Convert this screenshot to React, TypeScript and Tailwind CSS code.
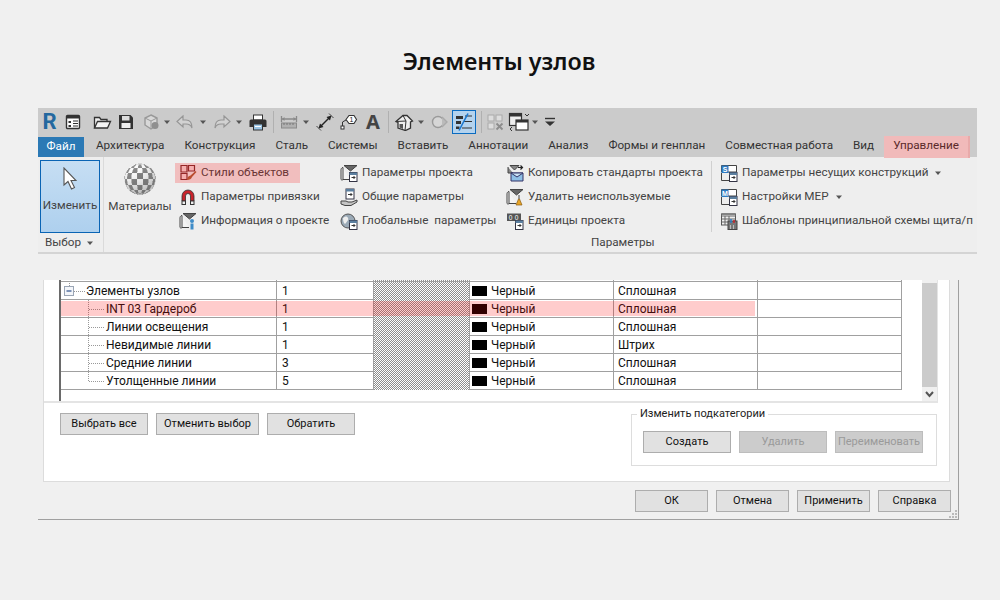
import type { ReactNode } from "react";

function Caret() {
    return (
        <svg width="8" height="8" viewBox="0 0 8 8" className="shrink-0">
            <path d="M1 2.5h6L4 6z" fill="#555" />
        </svg>
    );
}

function Ic({ children, w = 18, h = 18 }: { children: ReactNode; w?: number; h?: number }) {
    return (
        <svg width={w} height={h} viewBox={`0 0 ${w} ${h}`} fill="none" className="shrink-0">
            {children}
        </svg>
    );
}

// toolbar icons
const ListIcon = () => (
    <Ic>
        <rect x="2.5" y="2.5" width="13" height="13" rx="1" fill="#fff" stroke="#333" strokeWidth="1.4" />
        <path d="M3 3h12v2.5H3z" fill="#333" />
        <path d="M4.5 8h2.5v2H4.5zM4.5 12h2.5v2H4.5z" fill="#333" />
        <path d="M9 8h5M9 10.5h5M9 13h5" stroke="#333" />
    </Ic>
);
const OpenIcon = () => (
    <Ic w={20}>
        <path d="M2.5 15V4.5h5l1.5 2h6v2" stroke="#333" strokeWidth="1.3" fill="#eee" />
        <path d="M2.5 15l3-6.5h13l-3 6.5z" stroke="#333" strokeWidth="1.3" fill="#f4f4f4" />
    </Ic>
);
const SaveIcon = () => (
    <Ic>
        <path d="M2 2h11.5L16 4.5V16H2z" fill="#333" />
        <rect x="5" y="3" width="7.5" height="4.5" fill="#ddd" />
        <rect x="4.5" y="10" width="9" height="5" fill="#eee" />
    </Ic>
);
const CubeIcon = () => (
    <Ic>
        <path d="M9 2l6 3v7l-6 4-6-4V5z" stroke="#999" strokeWidth="1.4" fill="#d8d8d8" />
        <path d="M3 5l6 3 6-3M9 8v8" stroke="#999" />
        <circle cx="13" cy="12.5" r="3.5" fill="#8f8f8f" />
    </Ic>
);
const UndoIcon = ({ flip }: { flip?: boolean }) => (
    <Ic w={20}>
        <path
            d={flip ? "M12 3l6 5.5-6 5.5v-3H9c-3 0-5 1-6 4 0-5 2-8 6-8h3z" : "M8 3L2 8.5 8 14v-3h3c3 0 5 1 6 4 0-5-2-8-6-8H8z"}
            stroke="#969696"
            strokeWidth="1.2"
            fill="#d2d2d2"
        />
    </Ic>
);
const PrintIcon = () => (
    <Ic w={20}>
        <rect x="5.5" y="2" width="9" height="5" fill="#fff" stroke="#333" />
        <path d="M3 6.5h14a1.5 1.5 0 011.5 1.5v6h-17V8A1.5 1.5 0 013 6.5z" fill="#333" />
        <rect x="5.5" y="11" width="9" height="6" fill="#9cc6e6" stroke="#333" />
        <path d="M7 13.5h6" stroke="#fff" />
    </Ic>
);
const MeasureIcon = () => (
    <Ic>
        <path d="M1.5 3v6M16.5 3v6M2 6h14" stroke="#8a8a8a" strokeWidth="1.3" />
        <path d="M2 6l2.5-2v4zM16 6l-2.5-2v4z" fill="#8a8a8a" />
        <rect x="1.5" y="10" width="15" height="5" fill="#b0b0b0" stroke="#8a8a8a" />
        <path d="M4 10v2M7 10v2M10 10v2M13 10v2" stroke="#777" />
    </Ic>
);
const DimIcon = () => (
    <Ic>
        <path d="M4.5 13.5l9-9" stroke="#222" strokeWidth="1.5" />
        <path d="M2.5 15.5l1.5-5 3.5 3.5zM15.5 2.5l-5 1.5 3.5 3.5z" fill="#222" />
        <path d="M0.5 13l4.5 4.5M13 0.5l4.5 4.5" stroke="#444" />
    </Ic>
);
const TagIcon = () => (
    <Ic>
        <rect x="1" y="13" width="3" height="3" fill="#fff" stroke="#333" />
        <path d="M2.5 13V9L6 7" stroke="#333" />
        <path d="M6 6.5L9 2.5h5l2.5 4L14 10.5H9z" fill="#fff" stroke="#333" strokeWidth="1.1" />
        <text x="11.5" y="9" fontSize="7" textAnchor="middle" fill="#222" fontFamily="Liberation Sans">1</text>
    </Ic>
);
const HouseIcon = () => (
    <Ic w={20}>
        <path d="M2 8.5L9 2.5h4l5.5 5.5-2 1V15l-5 2.5L4 15V9.5z" fill="#eee" stroke="#333" strokeWidth="1.3" />
        <path d="M9 2.5l3 5.5-1 9.5M2 8.5l10-.5" stroke="#333" />
        <path d="M5.5 11h3.5v5l-3.5-1.5z" fill="#555" />
    </Ic>
);
const MarkIcon = () => (
    <Ic>
        <circle cx="8" cy="9" r="5.5" fill="#d6d6d6" stroke="#9a9a9a" strokeWidth="1.4" />
        <path d="M12 4l5 5-5 5" stroke="#aaa" strokeWidth="1.4" fill="#bbb" />
    </Ic>
);
const ThinIcon = () => (
    <Ic w={22} h={20}>
        <path d="M3 4h7v3H3zM3 9h5v3H3zM3 14.5h3.5v2.5H3z" fill="#333" />
        <path d="M12 4h7M11 9.5h8M9 16h10" stroke="#333" />
        <path d="M6 18.5L15 1.5" stroke="#1a78d0" strokeWidth="1.6" />
    </Ic>
);
const GridIcon = () => (
    <Ic>
        <rect x="2" y="2" width="6" height="6" fill="#ddd" stroke="#aaa" />
        <rect x="10" y="2" width="6" height="6" fill="#ddd" stroke="#aaa" />
        <rect x="2" y="10" width="6" height="6" fill="#ddd" stroke="#aaa" />
        <path d="M10.5 10.5l6 6M16.5 10.5l-6 6" stroke="#8c8c8c" strokeWidth="1.8" />
    </Ic>
);
const SwitchIcon = () => (
    <Ic w={22} h={20}>
        <rect x="1.5" y="1.5" width="12" height="12" fill="#eee" stroke="#333" strokeWidth="1.2" />
        <path d="M1.5 2h12v2.5h-12z" fill="#333" />
        <rect x="8" y="8" width="12" height="10" fill="#fff" stroke="#333" strokeWidth="1.2" />
        <path d="M8 8h12v2.5H8z" fill="#333" />
        <path d="M17 2l2 2 2-2M4 15l-2 2 2 2" stroke="#333" />
    </Ic>
);
const MenuIcon = () => (
    <svg width="12" height="12" viewBox="0 0 12 12" className="shrink-0">
        <path d="M1 2.5h10" stroke="#333" strokeWidth="1.4" />
        <path d="M1 5.5h10L6 10z" fill="#333" />
    </svg>
);

// small ribbon icons
const StyleIcon = () => (
    <Ic>
        <path d="M2 1.5h6v6.5H2zM9.5 1.5h6V7h-6zM2 9.5h6v6H2z" fill="#f3d9d9" stroke="#7a3030" strokeWidth="1.2" />
        <path d="M8 16c0-3 2-4 3.5-4.5L16.5 7l1 1-4.5 5c-.5 2-2.5 3-5 3z" fill="#a8603a" />
    </Ic>
);
const MagnetIcon = () => (
    <Ic>
        <path d="M3 13V8a6 6 0 0112 0v5h-3.5V8a2.5 2.5 0 00-5 0v5z" fill="#c8242c" stroke="#333" strokeWidth=".8" />
        <rect x="3" y="13" width="3.5" height="3.5" fill="#eee" stroke="#333" />
        <rect x="11.5" y="13" width="3.5" height="3.5" fill="#eee" stroke="#333" />
    </Ic>
);
const Funnel = () => (
    <>
        <path d="M4 1.5h13L10.5 7z" fill="#666" stroke="#444" />
        <path d="M3 3.5v12h7M3 3.5C1.5 3.5 1 5 1 6v9c0 1 1 1.5 2 .5" stroke="#444" fill="#f4f4f4" />
    </>
);
const DocBadge = () => (
    <>
        <rect x="9.5" y="8.5" width="7.5" height="9" fill="#fff" stroke="#334" />
        <path d="M9.5 8.5H17v2.5H9.5z" fill="#5b7f9f" />
        <path d="M11.5 13.5h3.5M13.5 12l1.5 1.5-1.5 1.5" stroke="#333" />
    </>
);
const InfoIcon = () => (
    <Ic>
        <Funnel />
        <circle cx="13" cy="9" r="2" fill="#3f8cc8" />
        <rect x="11.5" y="11.5" width="3" height="6" fill="#3f8cc8" />
    </Ic>
);
const ProjectIcon = () => (
    <Ic>
        <Funnel />
        <DocBadge />
    </Ic>
);
const SharedIcon = () => (
    <Ic>
        <rect x="6" y="1" width="8" height="10" fill="#fff" stroke="#334" />
        <path d="M6 1h8v2.5H6z" fill="#5b7f9f" />
        <path d="M8 6.5h4M10.5 5l1.5 1.5L10.5 8" stroke="#333" />
        <path d="M1 13h5l2 1h4l5-2v2l-6 3.5H5L1 16z" fill="#c4c4c4" stroke="#444" />
    </Ic>
);
const GlobalIcon = () => (
    <Ic>
        <circle cx="8" cy="9" r="7" fill="#9aa9b6" stroke="#555" />
        <path d="M3 6c2-2 4-2 5 0s-1 3-2 5-3 0-3-5z" fill="#eee" />
        <DocBadge />
    </Ic>
);
const CopyIcon = () => (
    <Ic>
        <path d="M4 1.5h9L8.5 6zM2 3v6h5" stroke="#444" fill="#888" />
        <path d="M12 3.5h4M14.5 1.5l2 2-2 2" stroke="#222" strokeWidth="1.2" />
        <path d="M5 9h12v8H5z" fill="#8fbfe6" stroke="#336" />
        <path d="M5 9h12l-6 4z" fill="#c9e0f3" stroke="#336" />
    </Ic>
);
const PurgeIcon = () => (
    <Ic>
        <Funnel />
        <path d="M12.5 7h1v4h-1z" fill="#444" />
        <path d="M10 17l2.5-6h1l2.5 6z" fill="#e8a526" stroke="#8a5a10" strokeWidth=".7" />
    </Ic>
);
const UnitsIcon = () => (
    <Ic>
        <rect x="1" y="1.5" width="14" height="7.5" fill="#555" />
        <text x="4.5" y="7.5" fontSize="6.5" fill="#fff" textAnchor="middle" fontFamily="Liberation Sans">0</text>
        <text x="10.5" y="7.5" fontSize="6.5" fill="#fff" textAnchor="middle" fontFamily="Liberation Sans">0</text>
        <DocBadge />
    </Ic>
);
const LetterDoc = ({ letter }: { letter: string }) => (
    <Ic>
        <path d="M1.5 1.5h15v6.5h-15z" fill="#fff" stroke="#444" />
        <rect x="1.5" y="1.5" width="7" height="7.5" fill="#2f7cc4" />
        <text x="5" y="7.5" fontSize="7" fill="#fff" textAnchor="middle" fontFamily="Liberation Sans" fontWeight="700">{letter}</text>
        <path d="M1.5 9v7.5H9" stroke="#444" />
        <DocBadge />
    </Ic>
);
const TemplateIcon = () => (
    <Ic>
        <rect x="1.5" y="2" width="14" height="11" fill="#eee" stroke="#555" />
        <path d="M1.5 2h14v2H1.5zM1.5 7h14M1.5 10h14M5 4v9M9 4v9" stroke="#666" />
        <rect x="8" y="9" width="9" height="8.5" fill="#777" stroke="#444" />
        <path d="M10 14h1M13 14h1M10 16h1M13 16h1" stroke="#fff" />
        <path d="M11 11V7" stroke="#2f7cc4" strokeWidth="1.5" />
        <path d="M14 11V8" stroke="#c8242c" strokeWidth="1.5" />
    </Ic>
);

// checkered sphere of the materials button, sampled per pixel
function Sphere() {
    const size = 32;
    const r = 15.5;
    const cells: ReactNode[] = [];
    for (let y = 0; y < size * 2; y++) {
        for (let x = 0; x < size * 2; x++) {
            const nx = (x / 2 + 0.25 - 16) / r;
            const ny = (y / 2 + 0.25 - 16) / r;
            const d = nx * nx + ny * ny;
            if (d > 1) continue;
            const nz = Math.sqrt(1 - d);
            const lon = Math.atan2(nx, nz) + 0.2;
            const lat = Math.asin(ny);
            const check = (Math.floor(lon / (Math.PI / 8)) + Math.floor(lat / (Math.PI / 8))) % 2 === 0;
            const light = 0.6 + 0.45 * Math.max(0, nz * 0.75 - ny * 0.4 - nx * 0.2);
            const v = Math.min(255, Math.round((check ? 250 : 95) * light + (1 - nz) * 45));
            cells.push(<rect key={`${x}-${y}`} x={x / 2} y={y / 2} width="0.55" height="0.55" fill={`rgb(${v},${v},${v})`} />);
        }
    }
    return <svg width={size} height={size} viewBox="0 0 32 32" className="shrink-0">{cells}</svg>;
}

function Tool({ className, children }: { className: string; children: ReactNode }) {
    return <div className={`flex h-full shrink-0 items-center justify-center ${className}`}>{children}</div>;
}

function Toolbar() {
    return (
        <div className="flex h-[28px] items-center bg-[#cbcbcb]">
            <Tool className="w-[23px]"><span className="text-[22px] font-bold leading-none text-[#23689f]">R</span></Tool>
            <Tool className="w-[24px]"><ListIcon /></Tool>
            <Tool className="ml-[5px] w-[24px]"><OpenIcon /></Tool>
            <Tool className="w-[24px]"><SaveIcon /></Tool>
            <Tool className="ml-[1px] w-[24px]"><CubeIcon /></Tool>
            <Tool className="w-[8px]"><Caret /></Tool>
            <Tool className="ml-[2px] w-[24px]"><UndoIcon /></Tool>
            <Tool className="ml-[2px] w-[8px]"><Caret /></Tool>
            <Tool className="ml-[3px] w-[24px]"><UndoIcon flip /></Tool>
            <Tool className="ml-[1px] w-[8px]"><Caret /></Tool>
            <Tool className="ml-[3px] w-[24px]"><PrintIcon /></Tool>
            <div className="ml-[3px] h-[22px] w-px bg-[#b0b0b0]" />
            <Tool className="ml-[3px] w-[24px]"><MeasureIcon /></Tool>
            <Tool className="ml-[1px] w-[8px]"><Caret /></Tool>
            <Tool className="ml-[3px] w-[24px]"><DimIcon /></Tool>
            <Tool className="w-[24px]"><TagIcon /></Tool>
            <Tool className="w-[24px]"><span className="font-['Noto_Sans'] text-[20px] font-bold leading-none text-[#444]">A</span></Tool>
            <div className="ml-[3px] h-[22px] w-px bg-[#b0b0b0]" />
            <Tool className="ml-[3px] w-[24px]"><HouseIcon /></Tool>
            <Tool className="ml-[1px] w-[8px]"><Caret /></Tool>
            <Tool className="ml-[2px] w-[24px]"><MarkIcon /></Tool>
            <Tool className="ml-[1px] w-[24px]">
                <div className="flex h-[24px] w-[24px] items-center justify-center border border-[#0a6bc0] bg-[#b4d3ee]"><ThinIcon /></div>
            </Tool>
            <div className="ml-[5px] h-[22px] w-px bg-[#b0b0b0]" />
            <Tool className="ml-[1px] w-[24px]"><GridIcon /></Tool>
            <Tool className="w-[24px]"><SwitchIcon /></Tool>
            <Tool className="w-[8px]"><Caret /></Tool>
            <Tool className="ml-[5px] w-[12px]"><MenuIcon /></Tool>
        </div>
    );
}

const tabs = ["Архитектура", "Конструкция", "Сталь", "Системы", "Вставить", "Аннотации", "Анализ", "Формы и генплан", "Совместная работа", "Вид"];

function Tabs() {
    return (
        <div className="flex h-[21px] items-end bg-[#cbcbcb] text-[11.7px] text-[#333]">
            <div className="flex h-[20px] w-[46px] shrink-0 items-center justify-center bg-[#2b79b5] text-white">Файл</div>
            <div className="flex pl-[2px]">
                {tabs.map((t) => (
                    <div key={t} className="flex h-[21px] items-center whitespace-nowrap px-[10px]">{t}</div>
                ))}
                <div className="relative z-10 flex h-[22px] translate-y-[1px] items-center whitespace-nowrap border-r-2 border-[#e8aaaa] bg-[#f1baba] pb-[2px] pl-[9px] pr-[9px] text-[#5a2a2a]">
                    Управление
                </div>
            </div>
        </div>
    );
}

function Item({ icon, label, caret, mark }: { icon: ReactNode; label: string; caret?: boolean; mark?: boolean }) {
    return (
        <div className="relative flex h-[24px] items-center gap-[4px] whitespace-pre">
            <div className="flex w-[18px] shrink-0 justify-center">{icon}</div>
            <span>{label}</span>
            {caret && <span className="ml-[2px]"><Caret /></span>}
            {mark && <div className="absolute left-[-4px] top-[2px] h-[20px] w-[125px] bg-[#ff0000]/20" />}
        </div>
    );
}

function Ribbon() {
    return (
        <div className="flex h-[97px] overflow-hidden border-b-2 border-[#d4d4d4] bg-[#eeeeee] text-[11.7px] text-[#444]">
            <div className="flex w-[66px] shrink-0 flex-col border-r border-[#dadada] pl-[2px] pt-[3px]">
                <div className="flex h-[73px] w-[60px] flex-col items-center border border-[#0a64b4] bg-linear-to-b from-[#c6def3] to-[#aed0ee] pt-[6px]">
                    <svg width="14" height="24" viewBox="0 0 14 24" className="shrink-0">
                        <path d="M1 1v17l4-3.5 3.5 7.5 3-1.5-3.5-7h5z" fill="#fff" stroke="#555" strokeWidth="1.1" />
                    </svg>
                    <span className="mt-[6px] leading-[16px]">Изменить</span>
                </div>
                <div className="mt-[1px] flex h-[17px] items-center gap-[5px] pl-[5px]">
                    Выбор <Caret />
                </div>
            </div>
            <div className="flex min-w-0 flex-col">
                <div className="flex h-[75px] pt-[4px]">
                    <div className="flex w-[72px] shrink-0 flex-col items-center pt-[2px]">
                        <Sphere />
                        <span className="mt-[3px] leading-[16px]">Материалы</span>
                    </div>
                    <div className="w-[164px] shrink-0 pl-[3px]">
                        <Item icon={<StyleIcon />} label="Стили объектов" mark />
                        <Item icon={<MagnetIcon />} label="Параметры привязки" />
                        <Item icon={<InfoIcon />} label="Информация о проекте" />
                    </div>
                    <div className="w-[166px] shrink-0">
                        <Item icon={<ProjectIcon />} label="Параметры проекта" />
                        <Item icon={<SharedIcon />} label="Общие параметры" />
                        <Item icon={<GlobalIcon />} label="Глобальные  параметры" />
                    </div>
                    <div className="w-[205px] shrink-0">
                        <Item icon={<CopyIcon />} label="Копировать стандарты проекта" />
                        <Item icon={<PurgeIcon />} label="Удалить неиспользуемые" />
                        <Item icon={<UnitsIcon />} label="Единицы проекта" />
                    </div>
                    <div className="shrink-0 border-l border-[#d0d0d0] pl-[8px]">
                        <Item icon={<LetterDoc letter="S" />} label="Параметры несущих конструкций" caret />
                        <Item icon={<LetterDoc letter="M" />} label="Настройки МЕР" caret />
                        <Item icon={<TemplateIcon />} label="Шаблоны принципиальной схемы щита/п" />
                    </div>
                </div>
                <div className="mt-[1px] pl-[487px] leading-[18px]">Параметры</div>
            </div>
        </div>
    );
}

const rows = [
    { name: "INT 03 Гардероб", weight: "1", line: "Сплошная", mark: true },
    { name: "Линии освещения", weight: "1", line: "Сплошная" },
    { name: "Невидимые линии", weight: "1", line: "Штрих" },
    { name: "Средние линии", weight: "3", line: "Сплошная" },
    { name: "Утолщенные линии", weight: "5", line: "Сплошная", last: true },
];

const cols = "grid w-[841px] grid-cols-[216px_97px_96px_144px_144px_144px]";
const cell = "flex items-center border-r border-[#a0a0a0]";
const hatch = "border-r border-[#a0a0a0] bg-[repeating-conic-gradient(#8e8e8e_0_25%,#ffffff_0_50%)] bg-size-[2px_2px]";

function Row({ first, weight, line, mark }: { first: ReactNode; weight: string; line: string; mark?: boolean }) {
    return (
        <div className={`relative h-[18px] border-b border-[#a0a0a0] ${cols}`}>
            <div className={cell}>{first}</div>
            <div className={`${cell} pl-[5px]`}>{weight}</div>
            <div className={hatch} />
            <div className={`${cell} gap-[4px] pl-[2px]`}>
                <div className="h-[10px] w-[15px] bg-black" />
                Черный
            </div>
            <div className={`${cell} pl-[4px]`}>{line}</div>
            <div className="border-r border-[#a0a0a0]" />
            {mark && <div className="absolute left-0 top-px h-[15px] w-[694px] bg-[#ff0000]/20" />}
        </div>
    );
}

function Btn({ label, w, off }: { label: string; w: string; off?: boolean }) {
    return (
        <button
            type="button"
            className={`flex h-[22px] shrink-0 items-center justify-center border text-[11px] ${w} ${off ? "border-[#bdbdbd] bg-[#cccccc] text-[#9a9a9a]" : "border-[#adadad] bg-[#e1e1e1] text-[#111]"}`}
        >
            {label}
        </button>
    );
}

function Styles() {
    return (
        <div className="ml-[5px] flex h-[202px] w-[907px] flex-col border-x border-b border-[#dcdcdc] bg-white">
            <div className="flex h-[123px] w-[894px] shrink-0 justify-between border-b-2 border-r border-[#e4e4e4]">
                <div className="ml-[15px] h-full border-l-2 border-[#6a6a6a]">
                    <div className={`h-px ${cols}`}>
                        <div className="border-r border-[#a0a0a0]" />
                        <div className="border-r border-[#a0a0a0]" />
                        <div className={hatch} />
                        <div className="border-r border-[#a0a0a0]" />
                        <div className="border-r border-[#a0a0a0]" />
                        <div className="border-r border-[#a0a0a0]" />
                    </div>
                    <div className="h-px w-[841px] bg-[#a0a0a0]" />
                    <Row
                        weight="1"
                        line="Сплошная"
                        first={
                            <>
                                <svg width="25" height="17" viewBox="0 0 25 17" className="shrink-0">
                                    <path d="M8.5 0v3" stroke="#999" strokeDasharray="1 1" />
                                    <rect x="3.5" y="3.5" width="9" height="9" fill="#f4f6fa" stroke="#9aa5b5" />
                                    <path d="M5.5 8h5" stroke="#2a4f8a" strokeWidth="1.2" />
                                    <path d="M13 8.5h11" stroke="#999" strokeDasharray="1 1" />
                                </svg>
                                Элементы узлов
                            </>
                        }
                    />
                    {rows.map((r) => (
                        <Row
                            key={r.name}
                            weight={r.weight}
                            line={r.line}
                            mark={r.mark}
                            first={
                                <>
                                    <svg width="45" height="18" viewBox="0 0 45 18" className="shrink-0">
                                        <path d={r.last ? "M27.5 0v9" : "M27.5 0v18"} stroke="#999" strokeDasharray="1 1" />
                                        <path d="M28 9.5h16" stroke="#999" strokeDasharray="1 1" />
                                    </svg>
                                    {r.name}
                                </>
                            }
                        />
                    ))}
                </div>
                <div className="flex h-full w-[15px] flex-col bg-[#f0f0f0] pt-[3px]">
                    <div className="h-[104px] bg-[#cbcbcb]" />
                    <div className="flex flex-1 items-center justify-center">
                        <svg width="9" height="7" viewBox="0 0 9 7">
                            <path d="M1 1l3.5 4L8 1" stroke="#555" strokeWidth="2" fill="none" />
                        </svg>
                    </div>
                </div>
            </div>
            <div className="flex w-[893px] items-start justify-between pl-[16px]">
                <div className="mt-[10px] flex gap-[8px]">
                    <Btn label="Выбрать все" w="w-[88px]" />
                    <Btn label="Отменить выбор" w="w-[103px]" />
                    <Btn label="Обратить" w="w-[88px]" />
                </div>
                <fieldset className="mt-[3px] h-[60px] w-[306px] border border-[#dddddd] px-[11px]">
                    <legend className="ml-[-6px] px-[3px] text-[11px] leading-[16px] text-[#222]">Изменить подкатегории</legend>
                    <div className="mt-[9px] flex gap-[8px]">
                        <Btn label="Создать" w="w-[88px]" />
                        <Btn label="Удалить" w="w-[88px]" off />
                        <Btn label="Переименовать" w="w-[88px]" off />
                    </div>
                </fieldset>
            </div>
        </div>
    );
}

export default function App() {
    return (
        <div className="h-[600px] w-[1000px] overflow-hidden bg-[#f0f0f0] font-['Roboto',sans-serif]">
            <h1 className="flex h-[108px] items-center justify-center pr-[2px] pt-[16px] font-['Noto_Sans',sans-serif] text-[23.3px] font-semibold leading-none text-[#111]">
                Элементы узлов
            </h1>
            <div className="ml-[38px] w-[939px]">
                <Toolbar />
                <Tabs />
                <Ribbon />
                <div className="h-[26px] w-[921px]" />
                <div className="relative h-[240px] w-[921px] border-b border-r border-[#a0a0a0] text-[12px] text-[#111]">
                    <Styles />
                    <div className="mt-[8px] flex justify-end gap-[8px] pr-[7px]">
                        <Btn label="ОК" w="w-[73px]" />
                        <Btn label="Отмена" w="w-[73px]" />
                        <Btn label="Применить" w="w-[73px]" />
                        <Btn label="Справка" w="w-[73px]" />
                    </div>
                    <svg width="8" height="8" viewBox="0 0 8 8" className="absolute bottom-[1px] right-[1px]">
                        <path d="M6 0h2v2H6zM3 3h2v2H3zM6 3h2v2H6zM0 6h2v2H0zM3 6h2v2H3zM6 6h2v2H6z" fill="#bbb" />
                    </svg>
                </div>
            </div>
        </div>
    );
}
